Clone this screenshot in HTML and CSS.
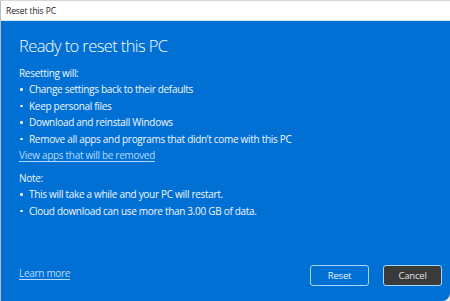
FILE: index.html
```html
<!DOCTYPE html>
<html>
<head>
<meta charset="utf-8">
<link rel="stylesheet" href="styles.css">
</head>
<body>
<div class="window">
  <div class="titlebar">Reset this PC</div>
  <div class="content">
    <h1 class="heading">Ready to reset this PC</h1>
    <p class="label">Resetting will:</p>
    <ul class="list">
      <li>Change settings back to their defaults</li>
      <li>Keep personal files</li>
      <li>Download and reinstall Windows</li>
      <li>Remove all apps and programs that didn’t come with this PC</li>
    </ul>
    <a class="link" href="#">View apps that will be removed</a>
    <p class="label note">Note:</p>
    <ul class="list">
      <li>This will take a while and your PC will restart.</li>
      <li>Cloud download can use more than 3.00 GB of data.</li>
    </ul>
    <div class="footer">
      <a class="link" href="#">Learn more</a>
      <div class="buttons">
        <button class="btn btn-reset">Reset</button>
        <button class="btn btn-cancel">Cancel</button>
      </div>
    </div>
  </div>
</div>
</body>
</html>
```
FILE: styles.css
```css
html, body {
  margin: 0;
  padding: 0;
  width: 450px;
  height: 301px;
  overflow: hidden;
  background: #e9e9e9;
}
.window {
  box-sizing: border-box;
  width: 450px;
  height: 301px;
  display: flex;
  flex-direction: column;
  border-top: 1px solid #d6d6d6;
  border-left: 1px solid #bdbdbd;
  border-bottom-right-radius: 8px;
  overflow: hidden;
  font-family: "Open Sans", "Noto Sans", sans-serif;
}
.titlebar {
  height: 19px;
  background: #ffffff;
  color: #1a1a1a;
  font-size: 8.5px;
  letter-spacing: -0.1px;
  display: flex;
  align-items: center;
  padding-left: 5px;
  border-bottom: 1px solid #dfe8ef;
}
.content {
  flex: 1;
  background: #0070d5;
  color: #f2f7ff;
  display: flex;
  flex-direction: column;
  padding: 13px 18px 15px 18px;
}
.heading {
  margin: 0;
  font-size: 16.5px;
  font-weight: 300;
  letter-spacing: -0.6px;
  line-height: 24px;
  color: #ffffff;
}
.label {
  margin: 7px 0 0 0;
  font-size: 10px;
  letter-spacing: -0.3px;
  line-height: 16.4px;
}
.note {
  margin-top: 6.6px;
}
.list {
  margin: 0;
  padding: 0;
  list-style: none;
  font-size: 10px;
  letter-spacing: -0.3px;
  line-height: 16.4px;
}
.list li {
  position: relative;
  padding-left: 10px;
}
.list li::before {
  content: "";
  position: absolute;
  left: 1px;
  top: 7px;
  width: 2.5px;
  height: 2.5px;
  border-radius: 50%;
  background: #f2f7ff;
}
.link {
  display: block;
  font-size: 10px;
  letter-spacing: -0.3px;
  line-height: 16.4px;
  color: #b4dbff;
  text-decoration: underline;
  text-underline-offset: 2px;
  align-self: flex-start;
}
.footer {
  margin-top: auto;
  display: flex;
  align-items: center;
  justify-content: space-between;
}
.buttons {
  display: flex;
  gap: 14px;
  margin-right: -10px;
}
.btn {
  box-sizing: border-box;
  width: 59px;
  height: 21px;
  border: 1.5px solid #a8d6ff;
  border-radius: 3px;
  font-family: "Open Sans", "Noto Sans", sans-serif;
  font-size: 9.5px;
  letter-spacing: -0.2px;
  color: #e6f2ff;
  padding: 0;
}
.btn-reset {
  background: #0070d5;
}
.btn-cancel {
  background: #3a3a3a;
  color: #e0e0e0;
}
```
